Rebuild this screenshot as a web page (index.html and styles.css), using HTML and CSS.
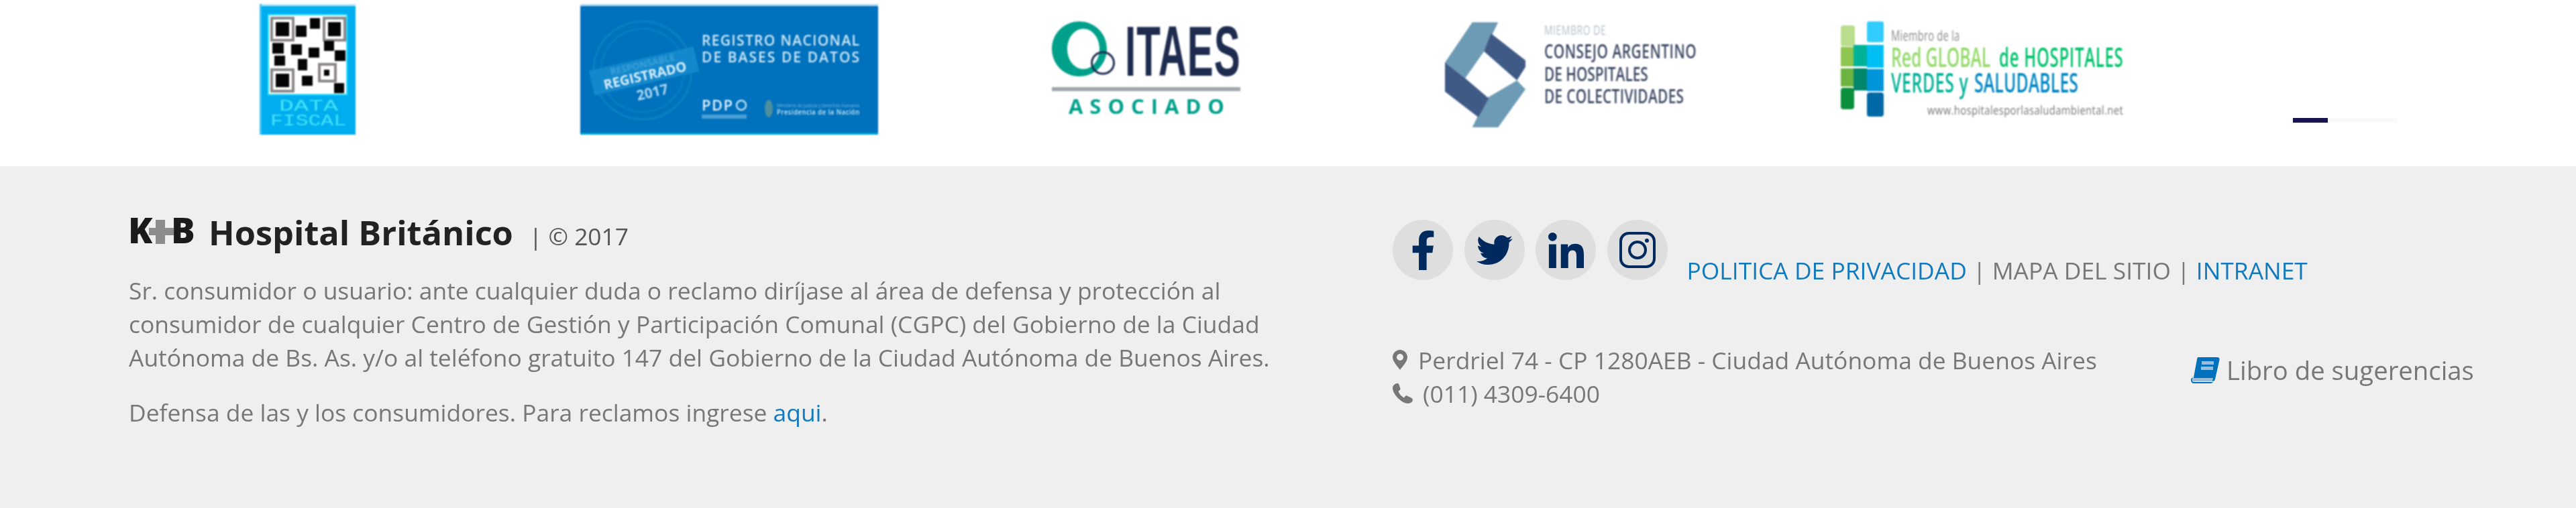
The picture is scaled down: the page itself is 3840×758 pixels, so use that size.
FILE: index.html
```html
<!DOCTYPE html>
<html lang="es">
<head>
<meta charset="utf-8">
<title>Hospital Británico</title>
<link rel="stylesheet" href="styles.css">
</head>
<body>
<section class="logos">
  <svg class="logo logo-fiscal" width="143" height="195" viewBox="0 0 143 195">
    <rect width="143" height="195" fill="#00aeef"/>
    <rect width="143" height="3" fill="#b5e8fb"/>
    <rect width="3" height="195" fill="#3cc4f5"/>
    <rect x="13" y="16" width="117" height="119" fill="#fff" stroke="#2fe0ff" stroke-width="2"/>
    <g fill="none" stroke="#8a8585" stroke-width="4">
      <rect x="18" y="21" width="32" height="33"/><rect x="96" y="21" width="31" height="33"/>
      <rect x="18" y="98" width="32" height="32"/><rect x="89" y="90" width="24" height="25"/>
    </g>
    <g fill="#050505">
      <rect x="24" y="27" width="20" height="21"/><rect x="102" y="27" width="19" height="21"/>
      <rect x="24" y="104" width="20" height="20"/><rect x="75" y="21" width="15" height="16"/>
      <rect x="54" y="32" width="16" height="17"/><rect x="19" y="58" width="17" height="16"/>
      <rect x="47" y="60" width="16" height="16"/><rect x="73" y="65" width="16" height="15"/>
      <rect x="96" y="55" width="15" height="15"/><rect x="112" y="69" width="16" height="16"/>
      <rect x="22" y="77" width="16" height="15"/><rect x="57" y="82" width="14" height="17"/>
      <rect x="63" y="107" width="16" height="15"/><rect x="111" y="118" width="15" height="15"/>
      <rect x="96" y="98" width="8" height="9"/>
    </g>
    <text class="t-fiscal" x="29" y="159" textLength="88" lengthAdjust="spacingAndGlyphs">DATA</text>
    <text class="t-fiscal" x="16" y="181" textLength="113" lengthAdjust="spacingAndGlyphs">FISCAL</text>
  </svg>

  <svg class="logo logo-reg" width="444" height="195" viewBox="0 0 444 195">
    <rect width="444" height="195" fill="#0071bc"/>
    <rect width="444" height="3" fill="#b8dcf0"/>
    <rect y="192" width="444" height="3" fill="#00a3d6"/>
    <circle cx="93" cy="99" r="73" fill="none" stroke="#0d80c4" stroke-width="3"/>
    <circle cx="93" cy="99" r="62" fill="none" stroke="#0d80c4" stroke-width="2"/>
    <g transform="rotate(-13 95 100)">
      <rect x="15" y="81" width="160" height="38" fill="#1488cc"/>
      <text class="t-reg-resp" x="95" y="95" text-anchor="middle">RESPONSABLE</text>
      <text class="t-reg-stamp" x="95" y="114" text-anchor="middle">REGISTRADO</text>
      <text class="t-reg-year" x="100" y="141" text-anchor="middle">2017</text>
    </g>
    <text class="t-reg-title" x="181" y="62" textLength="235" lengthAdjust="spacing">REGISTRO NACIONAL</text>
    <text class="t-reg-title" x="181" y="87" textLength="235" lengthAdjust="spacing">DE BASES DE DATOS</text>
    <text class="t-reg-pdp" x="181" y="159" textLength="46" lengthAdjust="spacing">PDP</text>
    <circle cx="240" cy="151" r="7" fill="none" stroke="#bfe0f4" stroke-width="2.500"/>
    <rect x="181" y="165" width="67" height="6" fill="#4b9ed4"/>
    <ellipse cx="281" cy="156" rx="6" ry="13" fill="#4d8f9c"/>
    <text class="t-reg-small" transform="translate(293 154) scale(.7 1)" textLength="176">Ministerio de Justicia y Derechos Humanos</text>
    <text class="t-reg-pres" transform="translate(293 165) scale(.85 1)" textLength="145">Presidencia de la Nación</text>
  </svg>

  <svg class="logo logo-itaes" width="281" height="190" viewBox="0 -32 281 190">
    <path fill="#00a08a" fill-rule="evenodd" d="M41 0C18 0 0 18 0 41s18 41 41 41 41-18 41-41S64 0 41 0zm6 11c13 0 24 13 24 30S60 71 47 71 23 58 23 41s11-30 24-30z"/>
    <ellipse cx="76" cy="62" rx="16.500" ry="16" fill="none" stroke="#1d2b4f" stroke-width="3"/>
    <text class="t-itaes" transform="translate(109 81) scale(.556 1)" textLength="309">ITAES</text>
    <rect y="98" width="281" height="6" fill="#a0a7ae"/>
    <text class="t-asoc" x="25" y="138" textLength="232" lengthAdjust="spacing">ASOCIADO</text>
  </svg>

  <svg class="logo logo-consejo" width="375" height="190" viewBox="0 -33 375 190">
    <g transform="translate(-653.8 -33) scale(.7015 .3333)">
      <polygon fill="#6d9bb5" points="990,100 1045,100 1015,230 975,350 932,280"/>
      <polygon fill="#3f5a85" points="1030,150 1103,270 1103,300 1085,360 1015,230"/>
      <polygon fill="#6d9bb5" points="1085,360 1103,400 1045,570 990,570 1020,440"/>
      <polygon fill="#3f5a85" points="932,280 975,350 1025,440 1003,525 932,410"/>
    </g>
    <text class="t-con-sm" transform="translate(148 19) scale(.7 1)" textLength="131">MIEMBRO DE</text>
    <text class="t-con" transform="translate(148 54) scale(.72 1)" textLength="315">CONSEJO ARGENTINO</text>
    <text class="t-con" transform="translate(148 88) scale(.72 1)" textLength="215">DE HOSPITALES</text>
    <text class="t-con" transform="translate(148 121) scale(.72 1)" textLength="289">DE COLECTIVIDADES</text>
  </svg>

  <svg class="logo logo-red" width="421" height="190" viewBox="0 -32 421 190">
    <g>
      <rect x="0" y="6" width="21" height="31" rx="3" fill="#b9dd8c"/>
      <rect x="0" y="38" width="20" height="29" fill="#8dc550"/>
      <rect x="0" y="70" width="20" height="27" fill="#6cb33f"/>
      <rect x="0" y="99" width="20" height="32" rx="4" fill="#0a8f3c"/>
      <rect x="19" y="35" width="20" height="32" fill="#00b398"/>
      <rect x="19" y="70" width="20" height="33" fill="#00876a"/>
      <rect x="39" y="0" width="25" height="31" rx="3" fill="#33ccff"/>
      <rect x="39" y="35" width="25" height="34" fill="#00bff3"/>
      <rect x="39" y="71" width="25" height="33" fill="#0095da"/>
      <rect x="39" y="106" width="25" height="36" rx="4" fill="#0069a5"/>
    </g>
    <text class="t-red-sm" transform="translate(75 29) scale(.7 1)" textLength="146">Miembro de la</text>
    <text class="t-red t-green-l" transform="translate(75 68) scale(.62 1)" textLength="239">Red GLOBAL</text>
    <text class="t-red t-green" transform="translate(236 68) scale(.6 1)" textLength="308">de HOSPITALES</text>
    <text class="t-red t-teal" transform="translate(75 106) scale(.62 1)" textLength="185">VERDES y</text>
    <text class="t-red t-blue" transform="translate(199 106) scale(.62 1)" textLength="250">SALUDABLES</text>
    <text class="t-red-url" transform="translate(129 139) scale(.78 1)" textLength="374">www.hospitalesporlasaludambiental.net</text>
  </svg>

  <div class="slider-dots"><span class="dot-on"></span><span class="dot-off"></span></div>
</section>

<footer class="footer">
  <div class="col-left">
    <div class="brand">
      <svg class="brand-mark" width="99" height="40" viewBox="0 0 99 40">
        <text class="t-mark" x="-1" y="39">K</text>
        <path fill="#8c8c8c" d="M40 4h14v12h13v11H54v13H40V27H30V16h10z"/>
        <text class="t-mark" x="63" y="39">B</text>
      </svg>
      <span class="brand-name">Hospital Británico</span>
      <span class="brand-copy">| © 2017</span>
    </div>
    <p class="para">Sr. consumidor o usuario: ante cualquier duda o reclamo diríjase al área de defensa y protección al consumidor de cualquier Centro de Gestión y Participación Comunal (CGPC) del Gobierno de la Ciudad Autónoma de Bs. As. y/o al teléfono gratuito 147 del Gobierno de la Ciudad Autónoma de Buenos Aires.</p>
    <p class="para para-last">Defensa de las y los consumidores. Para reclamos ingrese <a class="link" href="#">aqui</a>.</p>
  </div>

  <div class="col-right">
    <div class="top-row">
      <div class="socials">
        <a class="social" href="#" aria-label="Facebook"><svg class="ic-f" viewBox="0 0 320 512"><path d="M279.14 288l14.22-92.66h-88.91v-60.13c0-25.35 12.42-50.06 52.24-50.06h40.42V6.26S260.43 0 225.36 0c-73.22 0-121.08 44.38-121.08 124.72v70.62H22.89V288h81.39v224h100.17V288z"/></svg></a>
        <a class="social" href="#" aria-label="Twitter"><svg class="ic-t" viewBox="0 0 512 512"><path d="M459.37 151.716c.325 4.548.325 9.097.325 13.645 0 138.72-105.583 298.558-298.558 298.558-59.452 0-114.68-17.219-161.137-47.106 8.447.974 16.568 1.299 25.34 1.299 49.055 0 94.213-16.568 130.274-44.832-46.132-.975-84.792-31.188-98.112-72.772 6.498.974 12.995 1.624 19.818 1.624 9.421 0 18.843-1.3 27.614-3.573-48.081-9.747-84.143-51.98-84.143-102.985v-1.299c13.969 7.797 30.214 12.67 47.431 13.319-28.264-18.843-46.781-51.005-46.781-87.391 0-19.492 5.197-37.36 14.294-52.954 51.655 63.675 129.3 105.258 216.365 109.807-1.624-7.797-2.599-15.918-2.599-24.04 0-57.828 46.782-104.934 104.934-104.934 30.213 0 57.502 12.67 76.67 33.137 23.715-4.548 46.456-13.32 66.599-25.34-7.798 24.366-24.366 44.833-46.132 57.827 21.117-2.273 41.584-8.122 60.426-16.243-14.292 20.791-32.161 39.308-52.628 54.253z"/></svg></a>
        <a class="social" href="#" aria-label="LinkedIn"><svg class="ic-l" viewBox="0 0 448 448"><path d="M100.28 448H7.4V148.9h92.88zM53.79 108.1C24.09 108.1 0 83.5 0 53.8a53.79 53.79 0 0 1 107.58 0c0 29.7-24.1 54.3-53.79 54.3zM447.9 448h-92.68V302.4c0-34.7-.7-79.2-48.29-79.2-48.29 0-55.69 37.7-55.69 76.7V448h-92.78V148.9h89.08v40.8h1.3c12.4-23.5 42.69-48.3 87.88-48.3 94 0 111.28 61.9 111.28 142.3V448z"/></svg></a>
        <a class="social" href="#" aria-label="Instagram"><svg class="ic-i" viewBox="0 0 54 54"><rect x="2" y="2" width="50" height="50" rx="12" fill="none" stroke="#002a5e" stroke-width="4"/><circle cx="27" cy="27" r="12" fill="none" stroke="#002a5e" stroke-width="4"/><circle cx="41" cy="13" r="3"/></svg></a>
      </div>
      <nav class="site-links"><a class="link" href="#">POLITICA DE PRIVACIDAD</a> | MAPA DEL SITIO | <a class="link" href="#">INTRANET</a></nav>
    </div>
    <div class="bottom-row">
      <div class="contact">
        <div class="contact-line"><svg class="ic-pin" viewBox="0 0 22 30"><path fill-rule="evenodd" d="M11 0C5 0 0 5 0 11c0 7 8 14 11 19 3-5 11-12 11-19C22 5 17 0 11 0zm0 6a5 5 0 1 1 0 10 5 5 0 0 1 0-10z"/></svg>Perdriel 74 - CP 1280AEB - Ciudad Autónoma de Buenos Aires</div>
        <div class="contact-line"><svg class="ic-phone" viewBox="0 0 30 30"><path d="M7 0c1 0 2 .5 2.500 2l2 6c.3 1-.5 2-2 3-.7.6-1 1-.6 2 1.500 3 4 6 7 8 1 .5 1.500.3 2-.5 1-1.500 2-2.500 3.500-2l6 3c1.500.7 2.600 2 2.600 3.500 0 2-3 5-7 5C13 30 0 16 0 7c0-4 4-7 7-7z"/></svg>(011) 4309-6400</div>
      </div>
      <a class="book" href="#"><svg class="ic-book" viewBox="0 0 43 39"><path fill="#0071bc" d="M11 0h28c3 0 4 2 3.500 4L36 33c-.5 2-2 3-4 3H6c-2 0-3-1-2.500-3L9 3c.3-2 1-3 2-3z"/><path fill="#9dbcd8" d="M3 31h30l-1 5H6c-2 0-3-2-3-5z"/><path fill="#0071bc" d="M0 34c0-2 1-3 3-4l-1 4c0 2 1 3 3 3h28c-1 1-2 2-4 2H4c-2 0-4-2-4-5z"/><rect x="16" y="6" width="18" height="5" fill="#9dbcd8"/><rect x="15" y="14" width="18" height="5" fill="#9dbcd8"/></svg><span class="book-text">Libro de sugerencias</span></a>
    </div>
  </div>
</footer>
</body>
</html>
```
FILE: styles.css
```css
* { box-sizing: border-box; }
html, body { margin: 0; padding: 0; }
body {
  width: 3840px;
  height: 758px;
  overflow: hidden;
  background: #fff;
  font-family: "Open Sans", "Liberation Sans", sans-serif;
  font-size: 35.400px;
  line-height: 50px;
  color: #777;
}

.logos {
  display: flex;
  align-items: flex-start;
  height: 248px;
  padding-left: 387px;
}
.logo { display: block; flex: none; filter: blur(.8px); }
.logo-fiscal { margin-top: 6px; }
.logo-reg { margin: 6px 0 0 335px; }
.logo-itaes { margin-left: 259px; }
.logo-consejo { margin-left: 305px; }
.logo-red { margin-left: 215px; }

.slider-dots { display: flex; margin: 176px 0 0 253px; filter: blur(.5px); }
.dot-on { width: 52px; height: 7px; background: #16154f; }
.dot-off { width: 103px; height: 7px; background: #f9f9f9; }

.t-fiscal { font: 400 23px "Liberation Mono", monospace; fill: #45e4f8; }
.t-reg-resp { font: 700 14px "Open Sans", sans-serif; fill: #3aa0da; }
.t-reg-stamp { font: 700 20px "Open Sans", sans-serif; fill: #d9eefa; }
.t-reg-year { font: 700 21px "Open Sans", sans-serif; fill: #a9d6f0; }
.t-reg-title { font: 600 21px "Open Sans", sans-serif; fill: #cfe8f6; }
.t-reg-pdp { font: 600 22px "Open Sans", sans-serif; fill: #dff0fa; }
.t-reg-small { font: 400 8px "Open Sans", sans-serif; fill: #8fc2e2; }
.t-reg-pres { font: 600 11px "Open Sans", sans-serif; fill: #cfe8f6; }
.t-itaes { font: 700 105px "Liberation Sans", sans-serif; fill: #1d2b4f; }
.t-asoc { font: 700 31px "Open Sans", sans-serif; fill: #00a08a; }
.t-con-sm { font: 400 20px "Open Sans", sans-serif; fill: #b4bcc8; }
.t-con { font: 600 29px "Open Sans", sans-serif; fill: #3b4763; }
.t-red-sm { font: 400 21px "Open Sans", sans-serif; fill: #8a8a8a; }
.t-red { font: 600 40px "Open Sans", sans-serif; }
.t-green-l { fill: #95d96b; }
.t-green { fill: #00c26a; }
.t-teal { fill: #00b096; }
.t-blue { fill: #0086c2; }
.t-red-url { font: 400 19px "Open Sans", sans-serif; fill: #777; }

.footer {
  display: flex;
  height: 510px;
  padding-left: 192px;
  background: #efefef;
}
.col-left { flex: none; width: 1884px; padding-top: 72px; }
.brand { display: flex; align-items: baseline; height: 54px; }
.brand-mark { flex: none; align-self: flex-start; margin-top: 4px; filter: blur(.4px); }
.t-mark { font: 800 53px "Open Sans", sans-serif; fill: #1a1a1a; }
.brand-name {
  margin-left: 20px;
  font-weight: 700;
  font-size: 50.500px;
  line-height: 54px;
  color: #222;
  filter: blur(.5px);
}
.brand-copy { margin-left: 24px; font-size: 35.400px; color: #555; filter: blur(.5px); }
.para { width: 1725px; margin: 34px 0 0; filter: blur(.5px); }
.para-last { margin-top: 32px; }
.link { color: #1279bd; text-decoration: none; }

.col-right { flex: none; width: 1764px; padding-top: 80px; }
.top-row { display: flex; align-items: flex-end; }
.socials { display: flex; gap: 16.500px; filter: blur(.4px); }
.social {
  display: flex;
  align-items: center;
  justify-content: center;
  width: 90px;
  height: 90px;
  border-radius: 50%;
  background: #dedede;
  fill: #002a5e;
}
.ic-f { width: 37px; height: 59px; }
.ic-t { width: 54px; height: 54px; }
.ic-l { width: 55px; height: 53px; }
.ic-i { width: 54px; height: 54px; }
.site-links { margin: 0 0 -10px 29px; filter: blur(.5px); }

.bottom-row { display: flex; align-items: flex-start; margin-top: 94px; }
.contact { flex: none; width: 1190px; filter: blur(.5px); }
.contact-line { display: flex; align-items: center; }
.ic-pin { flex: none; width: 22px; height: 30px; margin-right: 16px; fill: #777; }
.ic-phone { flex: none; width: 30px; height: 30px; margin-right: 15px; fill: #777; }
.book { display: flex; align-items: center; margin-top: 15px; color: #777; text-decoration: none; filter: blur(.5px); }
.ic-book { flex: none; width: 43px; height: 39px; margin-right: 10px; }
.book-text { font-size: 38.300px; line-height: 50px; }
```
